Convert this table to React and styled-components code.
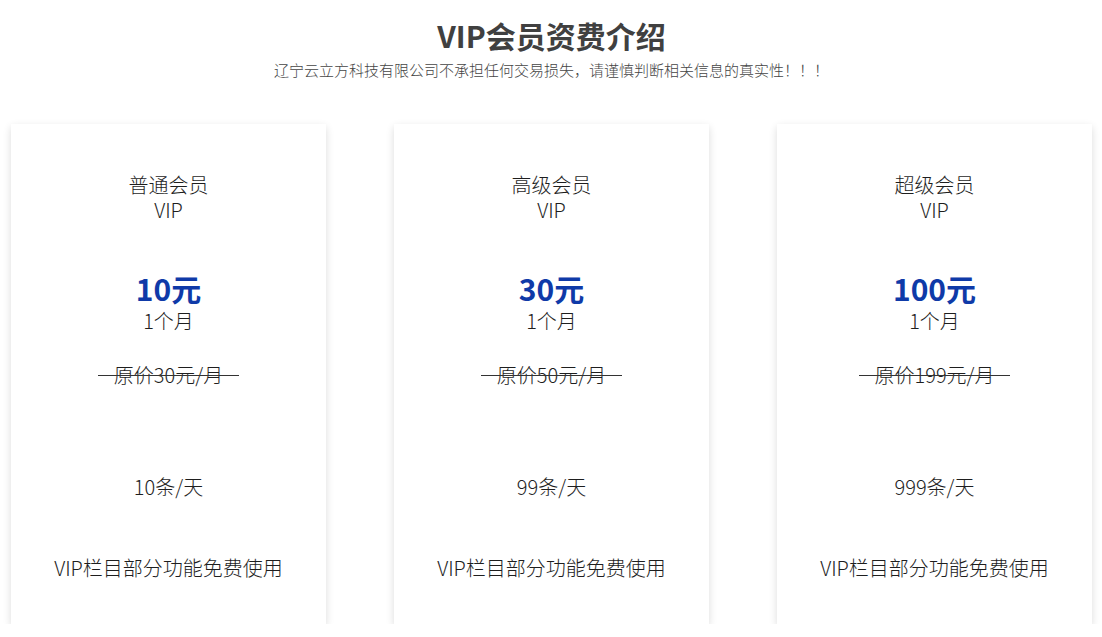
import React from "react";
import styled, { createGlobalStyle } from "styled-components";

const Global = createGlobalStyle`
  html, body { margin: 0; padding: 0; background: #fff; }
  body { font-family: "Noto Sans CJK SC", "Noto Sans", sans-serif; }
`;

const Page = styled.div`
  width: 1102px;
  padding: 15px 10px 0 11px;
  box-sizing: border-box;
`;

const Header = styled.header`
  display: flex;
  flex-direction: column;
  align-items: center;
`;

const Title = styled.h1`
  margin: 0;
  font-size: 30px;
  line-height: 40px;
  font-weight: 700;
  color: #404040;
`;

const Subtitle = styled.p`
  margin: 5px 0 0;
  font-size: 15px;
  line-height: 20px;
  font-weight: 300;
  color: #444;
`;

const Grid = styled.div`
  margin-top: 44px;
  display: grid;
  grid-template-columns: repeat(3, 315px);
  column-gap: 68px;
`;

const Card = styled.div`
  background: #fff;
  box-shadow: 0 3px 8px rgba(0, 0, 0, 0.14);
  padding: 48px 0 44px;
  display: flex;
  flex-direction: column;
  align-items: center;
  text-align: center;
  color: #1e1e1e;
  font-weight: 300;
  font-size: 20px;
  line-height: 25px;
`;

const Line = styled.div`
  margin-top: ${(p) => p.$gap || 0}px;
`;

const Price = styled.div`
  margin-top: 51px;
  font-size: 30px;
  line-height: 30px;
  font-weight: 700;
  color: #0f3aa8;
`;

const Old = styled.span`
  position: relative;
  display: inline-block;
  &::after {
    content: "";
    position: absolute;
    left: -16px;
    right: -16px;
    top: 13px;
    height: 1px;
    background: #333;
  }
`;

const plans = [
  { name: "普通会员", price: "10元", old: "原价30元/月", count: "10条/天" },
  { name: "高级会员", price: "30元", old: "原价50元/月", count: "99条/天" },
  { name: "超级会员", price: "100元", old: "原价199元/月", count: "999条/天" },
];

export default function App() {
  return (
    <Page>
      <Global />
      <Header>
        <Title>VIP会员资费介绍</Title>
        <Subtitle>辽宁云立方科技有限公司不承担任何交易损失，请谨慎判断相关信息的真实性！！！</Subtitle>
      </Header>
      <Grid>
        {plans.map((p) => (
          <Card key={p.name}>
            <Line>{p.name}</Line>
            <Line>VIP</Line>
            <Price>{p.price}</Price>
            <Line $gap={5}>1个月</Line>
            <Line $gap={29}>
              <Old>{p.old}</Old>
            </Line>
            <Line $gap={87}>{p.count}</Line>
            <Line $gap={56}>VIP栏目部分功能免费使用</Line>
          </Card>
        ))}
      </Grid>
    </Page>
  );
}
